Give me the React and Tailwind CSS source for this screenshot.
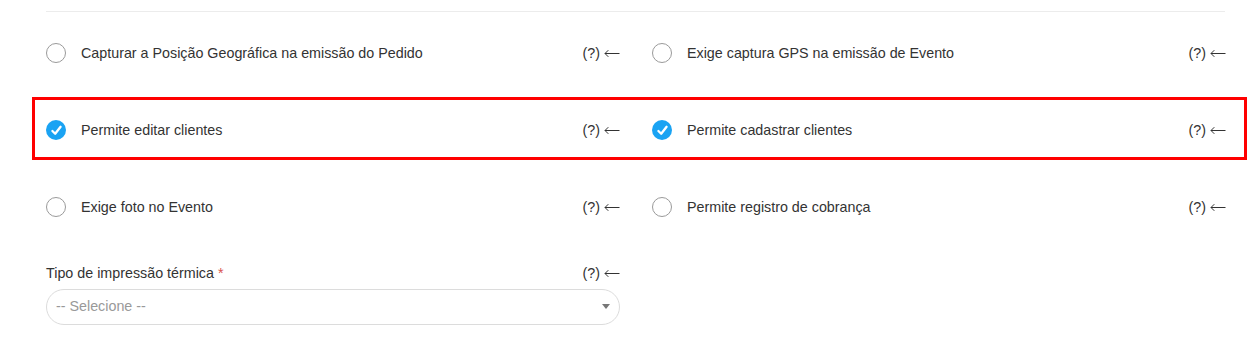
import React, { useState } from "react";

const Help = () => (
  <span className="flex items-center gap-[4px] pt-[1px] text-[14.3px] text-[#333] whitespace-nowrap">
    <span>(?)</span>
    <svg width="16" height="9" viewBox="0 0 16 9" fill="none">
      <path d="M1 4.5 H15.5" stroke="#333" strokeWidth="1" />
      <path d="M4.3 1.2 L1 4.5 L4.3 7.8" stroke="#333" strokeWidth="1" />
    </svg>
  </span>
);

const RadioOption = ({ label, checked, onToggle }) => (
  <div className="flex items-center justify-between h-5">
    <button
      type="button"
      onClick={onToggle}
      className="flex items-center gap-[15px] text-left"
    >
      {checked ? (
        <span className="flex items-center justify-center w-5 h-5 rounded-full bg-[#1aa3f3]">
          <svg width="13" height="13" viewBox="0 0 13 13" fill="none">
            <path
              d="M2.4 7 L5.2 9.8 L10.6 2.8"
              stroke="white"
              strokeWidth="2.3"
              strokeLinecap="round"
              strokeLinejoin="round"
            />
          </svg>
        </span>
      ) : (
        <span className="w-5 h-5 rounded-full border border-[#9a9a9a] bg-white" />
      )}
      <span className="pt-[1px] text-[14.3px] text-[#333]">{label}</span>
    </button>
    <Help />
  </div>
);

const App = () => {
  const [options, setOptions] = useState({
    gpsPedido: false,
    gpsEvento: false,
    editarClientes: true,
    cadastrarClientes: true,
    fotoEvento: false,
    cobranca: false,
  });
  const [impressao, setImpressao] = useState("");

  const toggle = (key) =>
    setOptions((prev) => ({ ...prev, [key]: !prev[key] }));

  return (
    <div
      className="bg-white min-h-[360px] pl-[46px] pr-[31px] pt-[11px]"
      style={{ fontFamily: '"Liberation Sans", Arial, sans-serif' }}
    >
      <div className="border-t border-[#ececec] mr-[1px]" />

      {/* Row 1 */}
      <div className="grid grid-cols-2 gap-8 mt-[31px]">
        <RadioOption
          label="Capturar a Posição Geográfica na emissão do Pedido"
          checked={options.gpsPedido}
          onToggle={() => toggle("gpsPedido")}
        />
        <RadioOption
          label="Exige captura GPS na emissão de Evento"
          checked={options.gpsEvento}
          onToggle={() => toggle("gpsEvento")}
        />
      </div>

      {/* Row 2 - highlighted */}
      <div className="mt-[34px] ml-[-14px] mr-[-21px] border-[3px] border-[#ff0000] pl-[11px] pr-[18px] pt-[20px] pb-[17px]">
        <div className="grid grid-cols-2 gap-8">
          <RadioOption
            label="Permite editar clientes"
            checked={options.editarClientes}
            onToggle={() => toggle("editarClientes")}
          />
          <RadioOption
            label="Permite cadastrar clientes"
            checked={options.cadastrarClientes}
            onToggle={() => toggle("cadastrarClientes")}
          />
        </div>
      </div>

      {/* Row 3 */}
      <div className="grid grid-cols-2 gap-8 mt-[37px]">
        <RadioOption
          label="Exige foto no Evento"
          checked={options.fotoEvento}
          onToggle={() => toggle("fotoEvento")}
        />
        <RadioOption
          label="Permite registro de cobrança"
          checked={options.cobranca}
          onToggle={() => toggle("cobranca")}
        />
      </div>

      {/* Tipo de impressao */}
      <div className="grid grid-cols-2 gap-8 mt-[46px]">
        <div>
          <div className="flex items-center justify-between h-5">
            <label className="pt-[1px] text-[14.3px] text-[#333]">
              Tipo de impressão térmica <span className="text-[#d9534f]">*</span>
            </label>
            <Help />
          </div>
          <div className="relative mt-[6px]">
            <select
              value={impressao}
              onChange={(e) => setImpressao(e.target.value)}
              className="w-full h-[36px] appearance-none rounded-[18px] border border-[#dcdcdc] bg-white pl-[9px] pr-8 text-[14.3px] text-[#999] focus:outline-none"
            >
              <option value="">-- Selecione --</option>
              <option value="58">Bobina 58mm</option>
              <option value="80">Bobina 80mm</option>
            </select>
            <span className="pointer-events-none absolute right-[10px] top-[15px] w-0 h-0 border-l-[4px] border-r-[4px] border-t-[5px] border-l-transparent border-r-transparent border-t-[#777]" />
          </div>
        </div>
        <div />
      </div>
    </div>
  );
};

export default App;
